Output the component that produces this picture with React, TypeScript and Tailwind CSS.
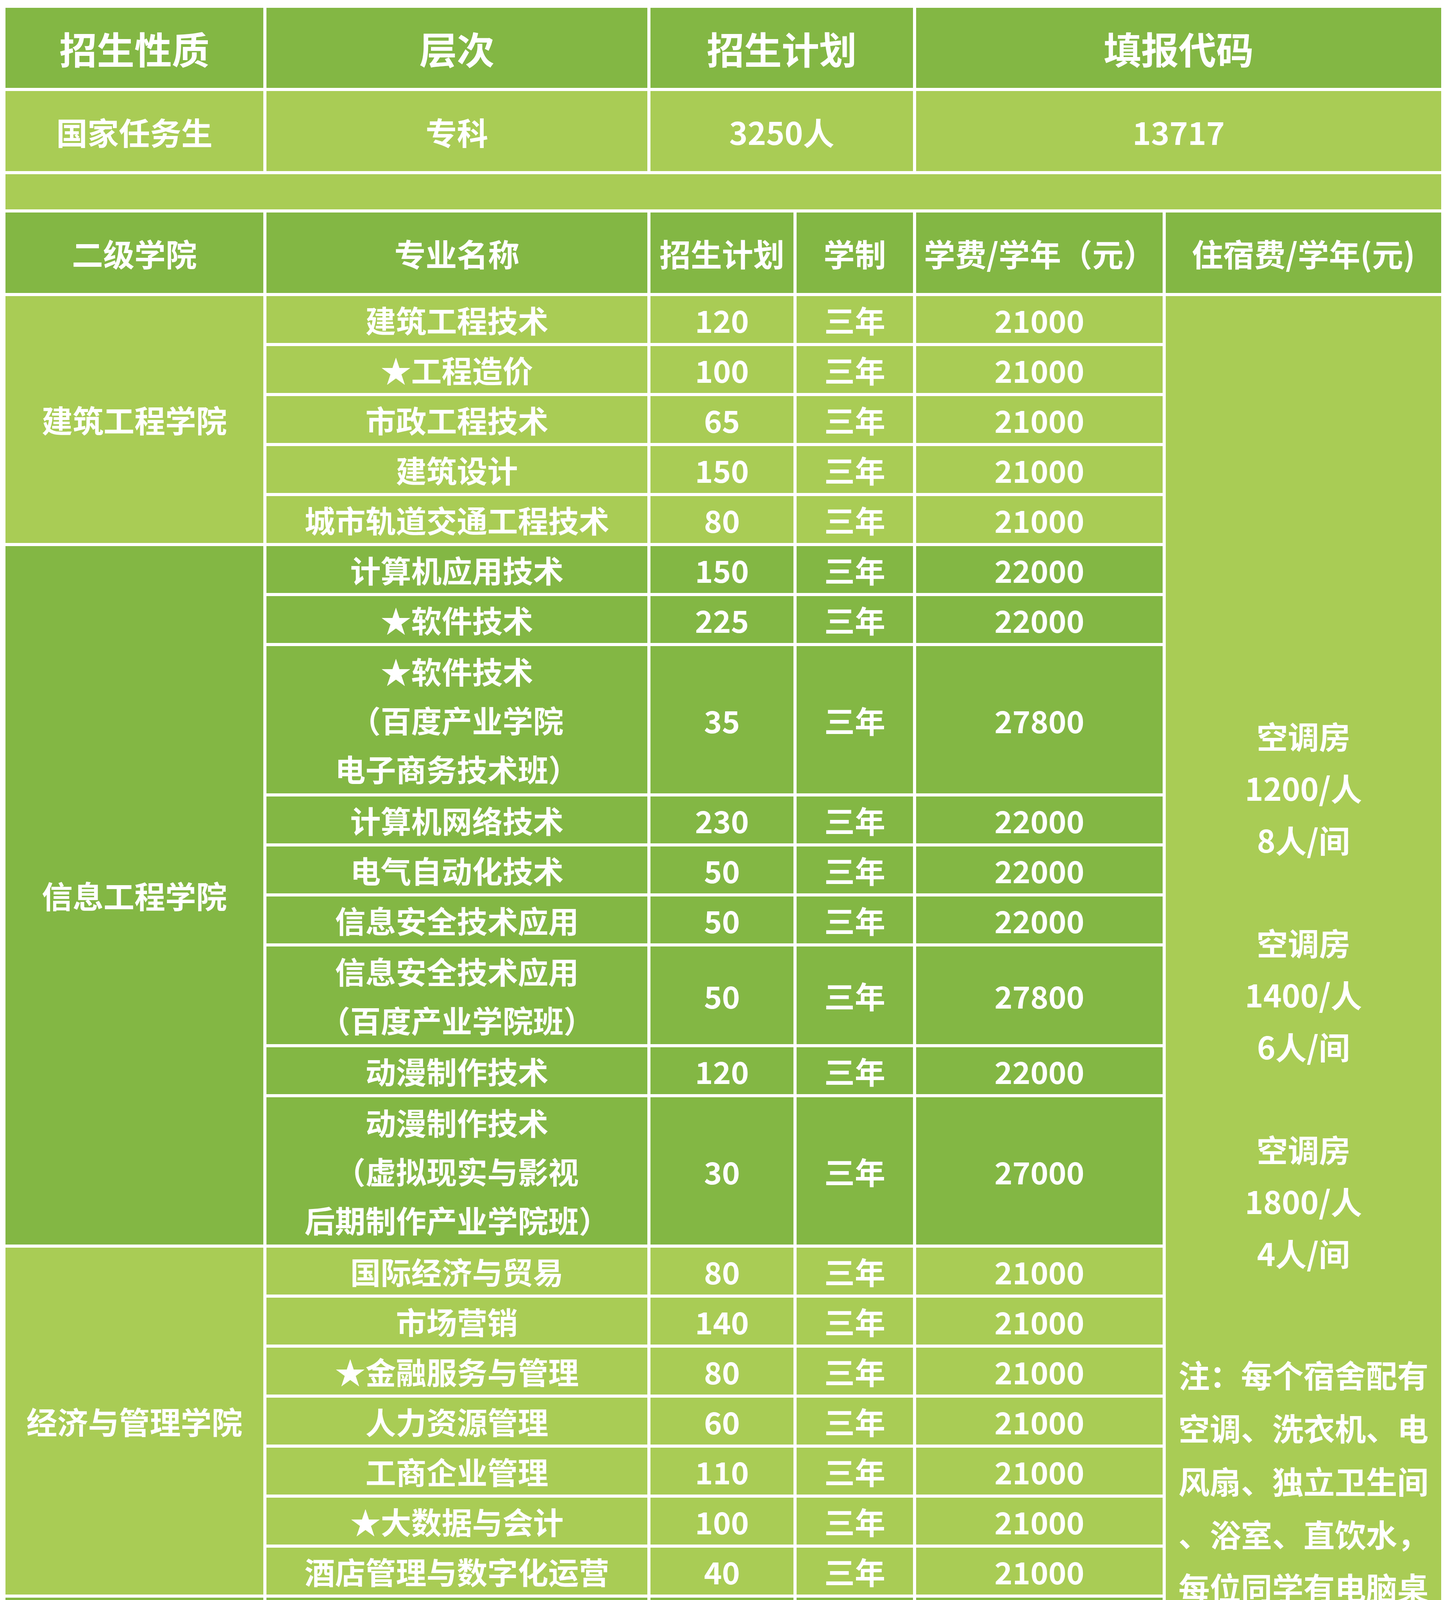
type Major = { lines: string[]; plan: string; fee: string };
type Group = { name: string; dark: boolean; rows: Major[] };

const m = (name: string | string[], plan: string, fee: string): Major => ({
  lines: Array.isArray(name) ? name : [name],
  plan,
  fee,
});

const GROUPS: Group[] = [
  {
    name: "建筑工程学院",
    dark: false,
    rows: [
      m("建筑工程技术", "120", "21000"),
      m("★工程造价", "100", "21000"),
      m("市政工程技术", "65", "21000"),
      m("建筑设计", "150", "21000"),
      m("城市轨道交通工程技术", "80", "21000"),
    ],
  },
  {
    name: "信息工程学院",
    dark: true,
    rows: [
      m("计算机应用技术", "150", "22000"),
      m("★软件技术", "225", "22000"),
      m(["★软件技术", "（百度产业学院", "电子商务技术班）"], "35", "27800"),
      m("计算机网络技术", "230", "22000"),
      m("电气自动化技术", "50", "22000"),
      m("信息安全技术应用", "50", "22000"),
      m(["信息安全技术应用", "（百度产业学院班）"], "50", "27800"),
      m("动漫制作技术", "120", "22000"),
      m(["动漫制作技术", "（虚拟现实与影视", "后期制作产业学院班）"], "30", "27000"),
    ],
  },
  {
    name: "经济与管理学院",
    dark: false,
    rows: [
      m("国际经济与贸易", "80", "21000"),
      m("市场营销", "140", "21000"),
      m("★金融服务与管理", "80", "21000"),
      m("人力资源管理", "60", "21000"),
      m("工商企业管理", "110", "21000"),
      m("★大数据与会计", "100", "21000"),
      m("酒店管理与数字化运营", "40", "21000"),
    ],
  },
  {
    name: "健康学院",
    dark: true,
    rows: [
      m("药品经营与管理", "100", "21000"),
      m("化妆品经营与管理", "40", "21000"),
      m("护理", "80", "18500"),
      m("婴幼儿托育服务与管理", "60", "21000"),
    ],
  },
  {
    name: "自动化工程学院",
    dark: false,
    rows: [
      m("数控技术", "40", "18000"),
      m("模具设计与制造", "40", "18000"),
      m("★机电一体化技术", "40", "18000"),
      m("工业机器人技术", "60", "18000"),
      m("汽车制造与试验技术", "40", "18000"),
      m("新能源汽车技术", "50", "18000"),
    ],
  },
  {
    name: "外语外贸学院",
    dark: true,
    rows: [m("商务英语", "150", "21000"), m("商务日语", "50", "21000")],
  },
  {
    name: "艺术与传媒学院",
    dark: false,
    rows: [
      m("艺术设计（美术类）", "30", "22000"),
      m(["服装与服饰设计", "（美术类）"], "30", "22000"),
      m(["环境艺术设计", "（美术类）"], "30", "22000"),
      m("工业设计", "45", "22000"),
      m("数字媒体技术", "140", "22000"),
      m("学前教育", "120", "22000"),
      m("印刷媒体技术", "40", "16000"),
    ],
  },
];

const SPAN: Record<number, string> = {
  2: "row-span-2",
  4: "row-span-4",
  5: "row-span-5",
  6: "row-span-6",
  7: "row-span-7",
  9: "row-span-9",
};

const HEIGHT: Record<number, string> = {
  1: "h-[120px]",
  2: "h-[250px]",
  3: "h-[377px]",
};

// dorm column: three price blocks then the note
const ROOMS = [
  ["空调房", "1200/人", "8人/间"],
  ["空调房", "1400/人", "6人/间"],
  ["空调房", "1800/人", "4人/间"],
];

const DORM_NOTE = [
  "注：每个宿舍配有",
  "空调、洗衣机、电",
  "风扇、独立卫生间",
  "、浴室、直饮水，",
  "每位同学有电脑桌",
  "、衣柜、书柜和床",
  "、上网接入口。",
  "每学年学校给予每",
  "生200元水电补贴",
  "，（报到前统一按",
  "六人间预收住宿费",
  "，入住八人间、四",
  "人间的学生到校后",
  "再统一结算住宿差",
  "价，多退少补）",
];

const DARK = "bg-[#83b744]";
const LIGHT = "bg-[#a9cc55]";
const cell = "flex items-center justify-center text-center";

export default function App() {
  return (
    <div className="bg-white pt-[20px] pb-[22px] pl-[14px] font-['Noto_Sans_CJK_SC','Liberation_Sans',sans-serif] font-bold text-white">
      <div className="grid w-[3675px] grid-cols-[660px_975px_366px_298px_631px_705px] gap-[8px]">
        {/* top summary */}
        <div className={`${cell} ${DARK} h-[205px] text-[96px]`}>招生性质</div>
        <div className={`${cell} ${DARK} text-[96px]`}>层次</div>
        <div className={`${cell} ${DARK} col-span-2 text-[96px]`}>招生计划</div>
        <div className={`${cell} ${DARK} col-span-2 text-[96px]`}>填报代码</div>

        <div className={`${cell} ${LIGHT} h-[205px] text-[80px]`}>国家任务生</div>
        <div className={`${cell} ${LIGHT} text-[80px]`}>专科</div>
        <div className={`${cell} ${LIGHT} col-span-2 text-[80px]`}>3250人</div>
        <div className={`${cell} ${LIGHT} col-span-2 text-[80px]`}>13717</div>

        <div className={`${LIGHT} col-span-6 h-[90px]`} />

        {/* detail header */}
        <div className={`${cell} ${DARK} h-[206px] text-[80px]`}>二级学院</div>
        <div className={`${cell} ${DARK} text-[80px]`}>专业名称</div>
        <div className={`${cell} ${DARK} text-[80px] whitespace-nowrap`}>招生计划</div>
        <div className={`${cell} ${DARK} text-[80px]`}>学制</div>
        <div className={`${cell} ${DARK} text-[80px] whitespace-nowrap`}>学费/学年（元）</div>
        <div className={`${cell} ${DARK} text-[80px] whitespace-nowrap`}>住宿费/学年(元)</div>

        {GROUPS.map((g, gi) =>
          g.rows.map((r, ri) => {
            const bg = g.dark ? DARK : LIGHT;
            return [
              ri === 0 && (
                <div key={`c${gi}`} className={`${cell} ${bg} ${SPAN[g.rows.length]} text-[79px]`}>
                  {g.name}
                </div>
              ),
              <div
                key={`n${gi}-${ri}`}
                className={`${cell} ${bg} ${HEIGHT[r.lines.length]} flex-col text-[78px] leading-[125px] whitespace-nowrap`}
              >
                {r.lines.map((l) => (
                  <div key={l}>{l}</div>
                ))}
              </div>,
              <div key={`p${gi}-${ri}`} className={`${cell} ${bg} text-[78px] leading-none`}>
                {r.plan}
              </div>,
              <div key={`y${gi}-${ri}`} className={`${cell} ${bg} text-[78px] leading-none`}>
                三年
              </div>,
              <div key={`f${gi}-${ri}`} className={`${cell} ${bg} text-[78px] leading-none`}>
                {r.fee}
              </div>,
              gi === 0 && ri === 0 && (
                <div
                  key="dorm"
                  className={`${LIGHT} row-span-40 flex flex-col items-center gap-[130px] pt-[1058px] text-[80px]`}
                >
                  {ROOMS.map((room, i) => (
                    <div key={i} className="flex flex-col items-center leading-[133px]">
                      {room.map((l) => (
                        <div key={l}>{l}</div>
                      ))}
                    </div>
                  ))}
                  <div className="mt-[46px] flex flex-col items-center leading-[136px]">
                    {DORM_NOTE.map((l) => (
                      <div key={l} className="whitespace-nowrap">
                        {l}
                      </div>
                    ))}
                  </div>
                </div>
              ),
            ];
          })
        )}

        {/* remark */}
        <div className={`${LIGHT} col-span-6 h-[406px] pt-[20px] pl-[14px] pr-[82px] text-[79px] leading-[130px]`}>
          <div className="[text-align-last:justify]">
            备注：本校信息安全技术与应用（百度产业学院班）、软件技术（百度产业学院电子商务技术班）、动
          </div>
          <div className="whitespace-nowrap [text-align-last:justify]">
            漫设计与制作（虚拟现实与影视后期制作产业学院班）为与企业联合培养专业，具体培养模式和收费标
          </div>
          <div>准详见本校招生网站。</div>
        </div>
      </div>
    </div>
  );
}
